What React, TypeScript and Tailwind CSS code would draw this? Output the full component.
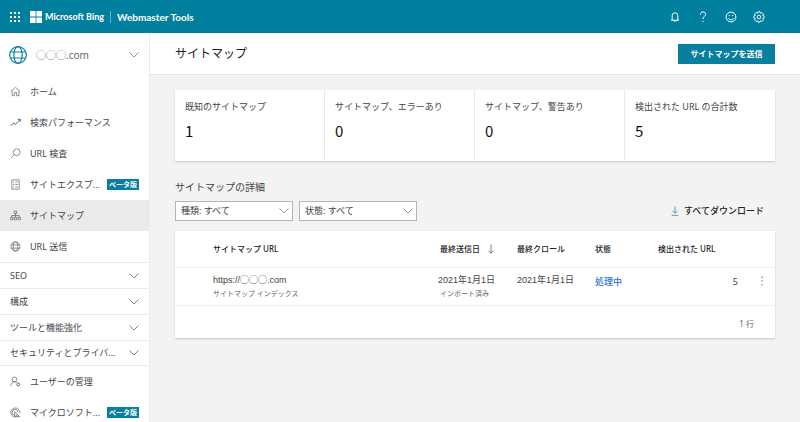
import type { ReactNode } from 'react'

const Chevron = ({ className = '' }: { className?: string }) => (
  <svg viewBox="0 0 10 6" className={`h-1.5 w-2.5 shrink-0 ${className}`} fill="none" stroke="currentColor" strokeWidth="0.8">
    <path d="M0.5 0.5 5 5 9.5 0.5" />
  </svg>
)

const Icon = ({ children, className = 'size-3' }: { children: ReactNode; className?: string }) => (
  <svg viewBox="0 0 12 12" className={`shrink-0 ${className}`} fill="none" stroke="currentColor" strokeWidth="0.7">
    {children}
  </svg>
)

const globe = (
  <>
    <circle cx="6" cy="6" r="5" />
    <ellipse cx="6" cy="6" rx="2.5" ry="5" />
    <path d="M1.5 4.2h9M1.5 7.8h9" />
  </>
)

const topItems = [
  {
    label: 'ホーム',
    icon: <path d="M1 6 6 1.4 11 6M2.3 5v5.6h2.4V7.2h2.6v3.4h2.4V5" />,
  },
  {
    label: '検索パフォーマンス',
    icon: <path d="M.6 9.8 4 6.4l1.6 1.8L11 2.8M8.4 2.6h2.8v2.8" strokeWidth="1" />,
  },
  {
    label: 'URL 検査',
    icon: (
      <>
        <circle cx="7.3" cy="4.6" r="3.7" />
        <path d="M4.6 7.3.8 11.1" />
      </>
    ),
  },
  {
    label: 'サイトエクスプ...',
    beta: true,
    icon: (
      <>
        <path d="M2 .9h8v10.2H2z" />
        <path d="M3.4 3.2h1.2M3.4 6h1.2M3.4 8.8h1.2M5.8 3.2h2.8M5.8 6h2.8M5.8 8.8h2.8" />
      </>
    ),
  },
  {
    label: 'サイトマップ',
    active: true,
    icon: (
      <>
        <path d="M4.7 1.2h2.6v2.6H4.7zM6 3.8V6M2 8V6h8v2M6 6v2" />
        <path d="M.7 8h2.6v2.6H.7zM4.7 8h2.6v2.6H4.7zM8.7 8h2.6v2.6H8.7z" />
      </>
    ),
  },
  { label: 'URL 送信', icon: globe },
]

const sections = ['SEO', '構成', 'ツールと機能強化', 'セキュリティとプライバ...']

const bottomItems = [
  {
    label: 'ユーザーの管理',
    icon: (
      <>
        <circle cx="5" cy="3.8" r="2.6" />
        <path d="M.8 11c.2-2.8 1.8-4.6 4.2-4.6 1 0 1.8.3 2.4.8" />
        <circle cx="9" cy="9.2" r="1.6" strokeWidth="1" />
      </>
    ),
  },
  {
    label: 'マイクロソフト...',
    beta: true,
    icon: (
      <>
        <path d="M10.8 7A5 5 0 1 0 6 11M8.8 5.5A3.2 3.2 0 1 0 5.5 9" />
        <path d="M5.2 5v5.6M5.2 5l5.4 5.6H5.2M7 8.4v2M8.6 9v1.6" />
      </>
    ),
  },
]

const stats = [
  { label: '既知のサイトマップ', value: 1 },
  { label: 'サイトマップ、エラーあり', value: 0 },
  { label: 'サイトマップ、警告あり', value: 0 },
  { label: '検出された URL の合計数', value: 5 },
]

type Item = { label: string; icon: ReactNode; beta?: boolean; active?: boolean }

function NavItem({ label, icon, beta, active }: Item) {
  return (
    <a href="#" className={`flex h-[31px] shrink-0 items-center px-2.5 ${active ? 'bg-[#eaeaea]' : ''}`}>
      <Icon className="size-[11px] text-[#555]">{icon}</Icon>
      <span className="ml-[9px] whitespace-nowrap">{label}</span>
      {beta && (
        <span className="ml-auto flex h-[11px] w-8 shrink-0 items-center justify-center bg-[#087f9f] text-[7px] font-bold text-white">
          ベータ版
        </span>
      )}
    </a>
  )
}

function Filter({ label, id }: { label: string; id: string }) {
  return (
    <div className="relative w-[118px]">
      <select
        id={id}
        aria-label={label}
        className="block h-5 w-full appearance-none border border-[#b5b5b5] bg-white pl-[5px] text-[9px] text-[#444]"
      >
        <option>{label}: すべて</option>
      </select>
      <Chevron className="pointer-events-none absolute top-[7px] right-1 text-[#777]" />
    </div>
  )
}

export default function App() {
  return (
    <div className="flex h-screen flex-col overflow-hidden bg-[#f3f3f3] font-['Noto_Sans','Noto_Sans_CJK_JP',sans-serif] text-[9px] leading-3 text-[#444]">
      <header className="flex h-[33px] shrink-0 items-center bg-[#007f9f] pr-[35px] pl-2.5 text-white">
        <button aria-label="アプリ" className="size-2.5">
          <svg viewBox="0 0 10 10" fill="currentColor">
            {[0, 4, 8].map((y) => [0, 4, 8].map((x) => <rect key={`${x}-${y}`} x={x} y={y} width="2" height="2" />))}
          </svg>
        </button>
        <svg viewBox="0 0 12 12" className="ml-2.5 size-3" fill="currentColor">
          <path d="M0 0h5.6v5.6H0zM6.4 0H12v5.6H6.4zM0 6.4h5.6V12H0zM6.4 6.4H12V12H6.4z" />
        </svg>
        <a href="#" className="ml-[3px] font-['Lato',sans-serif] text-[9px] font-bold">Microsoft Bing</a>
        <span className="mx-1.5 h-3 w-px bg-white/40" />
        <a href="#" className="font-['Lato',sans-serif] text-[10px] font-bold">Webmaster Tools</a>
        <div className="ml-auto flex gap-4">
          <button aria-label="通知">
            <Icon>
              <path d="M2 9.2h8M3.2 9V4.6a2.8 2.8 0 0 1 5.6 0V9M5 9.4c.2 1.4 1.8 1.4 2 0" strokeWidth="1" />
            </Icon>
          </button>
          <button aria-label="ヘルプ">
            <Icon>
              <path d="M3.4 3.6C3.4 1.8 4.5.9 6 .9s2.6.9 2.6 2.3C8.6 5.1 6 5.5 6 8M6 9.8v1.3" strokeWidth="1" />
            </Icon>
          </button>
          <button aria-label="フィードバック">
            <Icon>
              <circle cx="6" cy="6" r="4.9" strokeWidth="1" />
              <path d="M3.4 7.1c1 2.2 4.2 2.2 5.2 0M4.3 3.9v1.2M7.7 3.9v1.2" strokeWidth="1" />
            </Icon>
          </button>
          <button aria-label="設定">
            <Icon>
              <path d="M5 .8h2l.4 1.4 1.5-.7 1.5 1.5-.7 1.5 1.4.4v2.2l-1.4.4.7 1.5-1.5 1.5-1.5-.7L7 11.2H5l-.4-1.4-1.5.7-1.5-1.5.7-1.5L.9 7.1V4.9l1.4-.4L1.6 3l1.5-1.5 1.5.7z" strokeWidth="0.9" />
              <circle cx="6" cy="6" r="1.8" strokeWidth="0.9" />
            </Icon>
          </button>
        </div>
      </header>

      <div className="flex min-h-0 flex-1">
        <aside className="flex w-[150px] shrink-0 flex-col overflow-hidden border-r border-[#ececec] bg-white">
          <button className="flex h-[43px] shrink-0 items-center pr-2.5 pl-2 text-left">
            <Icon className="size-5 text-[#087f9f]">{globe}</Icon>
            <span className="ml-2 text-[10px] text-[#666]">◯◯◯.com</span>
            <Chevron className="ml-auto text-[#777]" />
          </button>
          <nav className="flex flex-col">
            {topItems.map((item) => (
              <NavItem key={item.label} {...item} />
            ))}
            {sections.map((label) => (
              <button
                key={label}
                className="flex h-[26px] items-center justify-between border-t border-[#ececec] px-2.5 text-left last-of-type:border-b"
              >
                <span className="whitespace-nowrap">{label}</span>
                <Chevron className="text-[#666]" />
              </button>
            ))}
            {bottomItems.map((item) => (
              <NavItem key={item.label} {...item} />
            ))}
          </nav>
        </aside>

        <main className="min-w-0 flex-1">
          <div className="flex h-[42px] items-center justify-between border-b border-[#e6e6e6] bg-white px-[25px]">
            <h1 className="text-[12px] leading-4 text-[#222]">サイトマップ</h1>
            <button className="h-5 w-[97px] bg-[#087f9f] text-[8px] font-bold text-white">サイトマップを送信</button>
          </div>

          <div className="px-[25px] pt-[15px]">
            <section className="grid grid-cols-4 divide-x divide-[#e8e8e8] bg-white shadow-[0_1px_2px_rgba(0,0,0,0.18)]">
              {stats.map((s) => (
                <div key={s.label} className="h-[71px] pt-[11px] pl-2.5">
                  <p className="whitespace-nowrap">{s.label}</p>
                  <p className="mt-2 font-['Noto_Sans_CJK_JP',sans-serif] text-[15px] leading-5 text-[#111]">{s.value}</p>
                </div>
              ))}
            </section>

            <h2 className="mt-5 text-[10px] leading-3">サイトマップの詳細</h2>
            <div className="mt-2 flex items-center gap-1.5">
              <Filter id="type" label="種類" />
              <Filter id="status" label="状態" />
              <button className="mr-[11px] ml-auto flex items-center gap-1 font-medium text-[#222]">
                <Icon className="size-2.5 text-[#2f86a3]">
                  <path d="M6 .5v8M3 5.7l3 3 3-3M2 11.3h8" strokeWidth="0.9" />
                </Icon>
                すべてダウンロード
              </button>
            </div>

            <section className="mt-2.5 bg-white shadow-[0_1px_2px_rgba(0,0,0,0.18)]">
              <table className="w-full table-fixed text-left">
                <colgroup>
                  <col />
                  <col className="w-[79px]" />
                  <col className="w-[78px]" />
                  <col className="w-[63px]" />
                  <col className="w-[80px]" />
                  <col className="w-[37px]" />
                </colgroup>
                <thead>
                  <tr className="h-9 border-b border-[#eee] text-[8px] whitespace-nowrap text-[#222]">
                    <th className="pl-[38px] font-medium">サイトマップ URL</th>
                    <th className="pl-0.5 font-medium">
                      <span className="flex items-center gap-1.5">
                        最終送信日
                        <Icon className="size-2.5 text-[#555]">
                          <path d="M6 .5V11M3 8l3 3 3-3" strokeWidth="0.9" />
                        </Icon>
                      </span>
                    </th>
                    <th className="font-medium">最終クロール</th>
                    <th className="font-medium">状態</th>
                    <th className="font-medium">検出された URL</th>
                    <th aria-label="操作" />
                  </tr>
                </thead>
                <tbody>
                  <tr className="h-[38px] border-b border-[#eee] align-top whitespace-nowrap">
                    <td className="pt-1.5 pl-[38px]">
                      <p className="font-['Liberation_Sans','Noto_Sans_CJK_JP',sans-serif]">https://◯◯◯.com</p>
                      <p className="mt-0.5 text-[7px] text-[#666]">サイトマップ インデックス</p>
                    </td>
                    <td className="pt-1.5">
                      <p className="font-['Liberation_Sans','Noto_Sans_CJK_JP',sans-serif]">2021年1月1日</p>
                      <p className="mt-0.5 pl-0.5 text-[7px] text-[#666]">インポート済み</p>
                    </td>
                    <td className="pt-1.5 font-['Liberation_Sans','Noto_Sans_CJK_JP',sans-serif]">2021年1月1日</td>
                    <td className="pt-2">
                      <a href="#" className="font-medium text-[#2b73cf]">処理中</a>
                    </td>
                    <td className="pt-2 text-right">5</td>
                    <td className="pt-2">
                      <button aria-label="メニュー" className="ml-[22px] block">
                        <svg viewBox="0 0 4 10" className="h-2.5 w-1" fill="#666">
                          <circle cx="2" cy="1.2" r="0.7" />
                          <circle cx="2" cy="5" r="0.7" />
                          <circle cx="2" cy="8.8" r="0.7" />
                        </svg>
                      </button>
                    </td>
                  </tr>
                </tbody>
              </table>
              <p className="h-8 pt-3 pr-[21px] text-right text-[8px] text-[#666]">1 行</p>
            </section>
          </div>
        </main>
      </div>
    </div>
  )
}
